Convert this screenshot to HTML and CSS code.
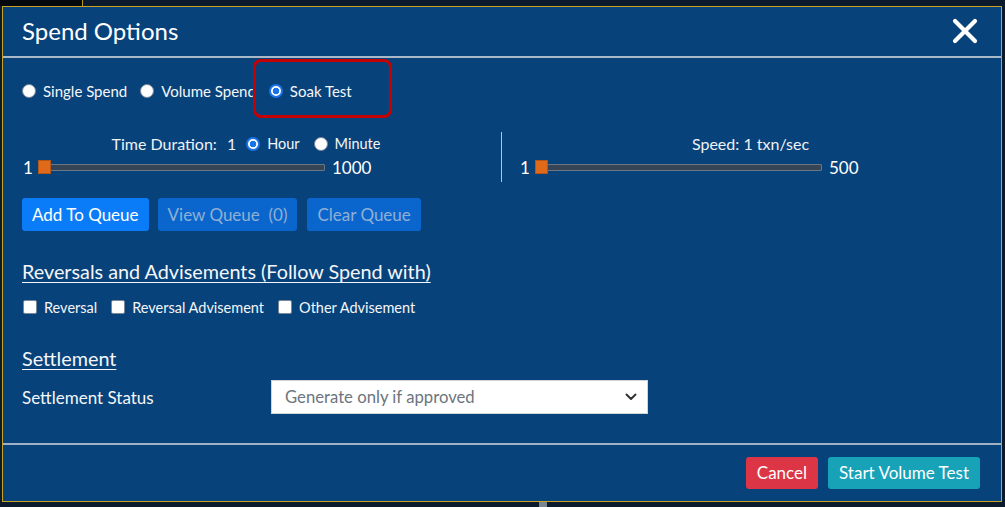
FILE: index.html
```html
<!DOCTYPE html>
<html>
<head>
<meta charset="utf-8">
<link rel="stylesheet" href="styles.css">
</head>
<body>
<div class="backdrop-corner"></div>
<div class="backdrop-mark"></div>
<div class="modal">
  <div class="modal-header">
    <h1 class="title">Spend Options</h1>
    <button class="close" aria-label="Close">
      <svg width="26" height="26" viewBox="0 0 26 26"><path d="M3 3 L23 23 M23 3 L3 23" stroke="#fff" stroke-width="4.2" stroke-linecap="round" fill="none"/></svg>
    </button>
  </div>

  <div class="modal-body">
    <div class="mode-row">
      <label class="opt"><span class="radio"></span>Single Spend</label>
      <label class="opt"><span class="radio"></span>Volume Spend</label>
      <label class="opt"><span class="radio checked"></span>Soak Test</label>
    </div>

    <div class="sliders">
      <div class="col col-left">
        <div class="col-title">
          <span class="td-label">Time Duration:</span>
          <span class="td-val">1</span>
          <label class="opt small"><span class="radio checked"></span>Hour</label>
          <label class="opt small"><span class="radio"></span>Minute</label>
        </div>
        <div class="slider">
          <span class="min">1</span>
          <span class="track"><span class="thumb"></span></span>
          <span class="max">1000</span>
        </div>
      </div>
      <div class="col col-right">
        <div class="col-title">Speed: 1 txn/sec</div>
        <div class="slider">
          <span class="min">1</span>
          <span class="track"><span class="thumb"></span></span>
          <span class="max">500</span>
        </div>
      </div>
    </div>

    <div class="queue-buttons">
      <button class="btn btn-primary">Add To Queue</button>
      <button class="btn btn-disabled">View Queue&nbsp; (0)</button>
      <button class="btn btn-disabled">Clear Queue</button>
    </div>

    <h2 class="section-title first">Reversals and Advisements (Follow Spend with)</h2>
    <div class="check-row">
      <label class="opt"><span class="checkbox"></span>Reversal</label>
      <label class="opt"><span class="checkbox"></span>Reversal Advisement</label>
      <label class="opt"><span class="checkbox"></span>Other Advisement</label>
    </div>

    <h2 class="section-title second">Settlement</h2>
    <div class="settle-row">
      <span class="settle-label">Settlement Status</span>
      <div class="select">
        <span>Generate only if approved</span>
        <svg width="12" height="8" viewBox="0 0 12 8"><path d="M1.5 1.5 L6 6 L10.5 1.5" stroke="#333" stroke-width="2" fill="none" stroke-linecap="round" stroke-linejoin="round"/></svg>
      </div>
    </div>
  </div>

  <div class="modal-footer">
    <button class="btn btn-danger">Cancel</button>
    <button class="btn btn-info">Start Volume Test</button>
  </div>

  <div class="highlight"></div>
</div>
</body>
</html>
```

FILE: styles.css
```css
* { box-sizing: border-box; }

html, body {
  margin: 0;
  padding: 0;
}

body {
  width: 1005px;
  height: 507px;
  overflow: hidden;
  background: #0b1a2d;
  font-family: "Lato", "Noto Sans", sans-serif;
  color: #fff;
  position: relative;
  padding-top: 6px;
  padding-left: 2px;
}

.backdrop-corner {
  position: absolute;
  left: 0;
  top: 0;
  width: 83px;
  height: 6px;
  background: #05080d;
  border-right: 1px solid #b89a1e;
}

.backdrop-mark {
  position: absolute;
  left: 539px;
  top: 502px;
  width: 8px;
  height: 5px;
  background: #7d858e;
}

.modal {
  position: relative;
  width: 1000px;
  height: 496px;
  background: #08427a;
  border: 1px solid #c9a424;
  display: flex;
  flex-direction: column;
}

.modal-header {
  height: 51px;
  display: flex;
  align-items: center;
  padding: 0 23px 0 19px;
  border-bottom: 2px solid #a9b8c7;
}

.title {
  margin: 0;
  font-size: 24px;
  font-weight: 400;
  margin-top: -2px;
}

.close {
  margin-left: auto;
  background: none;
  border: 0;
  padding: 0;
  width: 26px;
  height: 26px;
  display: flex;
  margin-top: -2px;
}

.modal-body {
  flex: 1;
  padding: 0 19px;
}

.opt {
  display: inline-flex;
  align-items: center;
  font-size: 15px;
  gap: 7px;
  color: #f4f6f9;
}

.radio {
  width: 14px;
  height: 14px;
  border-radius: 50%;
  background: #fff;
  border: 1px solid #7a8796;
  display: inline-block;
  flex: none;
}
.radio.checked {
  border: 2px solid #1a73e8;
  background: radial-gradient(circle, #1a73e8 0 3px, #fff 3.6px);
}

.checkbox {
  width: 14px;
  height: 14px;
  border-radius: 2px;
  background: #fff;
  border: 1px solid #7a8796;
  display: inline-block;
  flex: none;
}

.mode-row {
  margin-top: 23px;
  height: 20px;
  display: flex;
  align-items: center;
  gap: 13px;
}

.sliders {
  margin-top: 31px;
  display: flex;
  height: 50px;
}

.col-left {
  width: 446px;
  flex: none;
}

.col-right {
  flex: none;
  margin-left: 33px;
  border-left: 1px solid #b9c4cf;
  width: 481px;
  padding-left: 17px;
}

.col-title {
  height: 22px;
  display: flex;
  align-items: center;
  justify-content: center;
  font-size: 16px;
  color: #eef1f5;
  padding-top: 1px;
}
.col-left .col-title { padding-left: 2px; }

.td-val { margin-left: 10px; margin-right: 10px; }
.opt.small { font-size: 14.5px; margin-right: 14px; }
.opt.small:last-child { margin-right: 0; }

.slider {
  margin-top: 5px;
  display: flex;
  align-items: center;
  height: 16px;
  font-size: 17px;
  padding-left: 1px;
  color: #fff;
}
.slider .min { width: 15px; }
.slider .max { margin-left: 7px; }

.track {
  position: relative;
  width: 287px;
  height: 7px;
  background: #364556;
  border: 1px solid #6b7784;
  border-radius: 1px;
  display: block;
}

.thumb {
  position: absolute;
  left: -1px;
  top: -5px;
  width: 13px;
  height: 14px;
  background: #e06a1a;
  border: 1px solid #b3561a;
}

.queue-buttons {
  margin-top: 16px;
  display: flex;
  gap: 9px;
}

.btn {
  font-family: "Lato", "Noto Sans", sans-serif;
  font-size: 17px;
  height: 33px;
  padding: 0 10px;
  border: 0;
  border-radius: 3px;
  color: #fff;
  line-height: 33px;
}
.queue-buttons .btn:last-child { margin-left: 1px; }

.btn-primary { background: #0b7cf8; }
.btn-disabled { background: #0a66cc; color: #8fb0d6; }

.section-title {
  margin: 0;
  font-size: 19.8px;
  font-weight: 400;
  text-decoration: underline;
  text-underline-offset: 3px;
  text-decoration-thickness: 1px;
  height: 22px;
  line-height: 22px;
  color: #f4f6f9;
}
.section-title.first { margin-top: 29px; }
.section-title.second { margin-top: 30px; }

.check-row {
  margin-top: 15px;
  height: 20px;
  display: flex;
  align-items: center;
  gap: 14px;
  padding-left: 1px;
}
.check-row .opt { gap: 7px; font-size: 14.5px; }

.settle-row {
  margin-top: 11px;
  display: flex;
  align-items: center;
}

.settle-label {
  width: 249px;
  font-size: 17px;
  color: #f4f6f9;
}

.select {
  width: 377px;
  height: 34px;
  background: #fff;
  border: 1px solid #cfd4da;
  display: flex;
  align-items: center;
  justify-content: space-between;
  padding: 0 10px 0 13px;
  font-size: 16.7px;
  color: #6c757d;
}

.modal-footer {
  height: 58px;
  border-top: 2px solid #9fb2c6;
  display: flex;
  align-items: center;
  justify-content: flex-end;
  gap: 10px;
  padding: 0 21px 1px 0;
}
.modal-footer .btn { height: 32px; line-height: 32px; padding: 0 11px; }

.btn-danger { background: #dc3545; }
.btn-info { background: #17a2b8; }

.highlight {
  position: absolute;
  left: 250px;
  top: 52px;
  width: 139px;
  height: 59px;
  border: 3px solid #c50000;
  border-radius: 8px;
  pointer-events: none;
}
```
